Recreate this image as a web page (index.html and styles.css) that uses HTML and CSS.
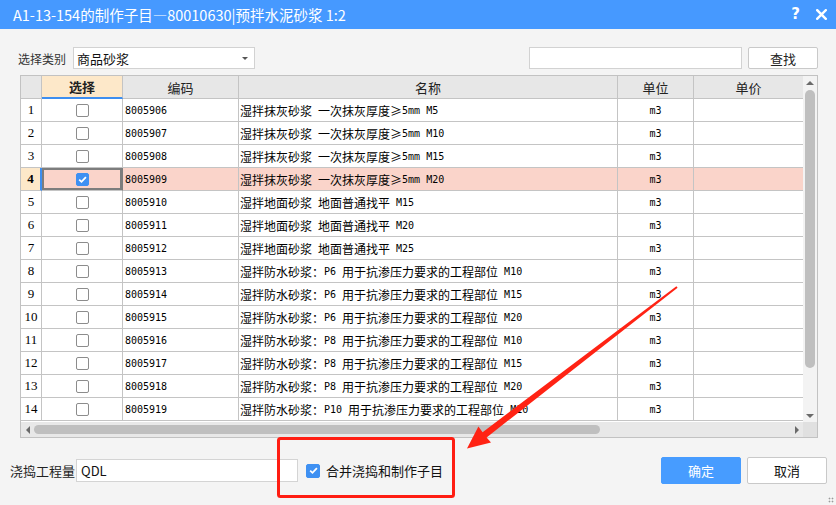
FILE: index.html
```html
<!DOCTYPE html>
<html lang="zh">
<head>
<meta charset="utf-8">
<title>制作子目</title>
<link rel="stylesheet" href="styles.css">
</head>
<body>
<div class="dialog">
  <div class="titlebar">
    <span class="title">A1-13-154的制作子目—80010630|预拌水泥砂浆 1:2</span>
    <span class="tb-btns">
      <span class="help">?</span>
      <svg class="close" width="11" height="11" viewBox="0 0 11 11"><path d="M1.2 1.2 L9.8 9.8 M9.8 1.2 L1.2 9.8" stroke="#fff" stroke-width="2.4" stroke-linecap="square"/></svg>
    </span>
  </div>

  <div class="toolbar">
    <span class="lbl">选择类别</span>
    <div class="combo"><span>商品砂浆</span><span class="caret"></span></div>
    <div class="spacer"></div>
    <div class="search"></div>
    <button class="btn find">查找</button>
  </div>

  <div class="grid">
    <div class="body">
      <div class="row head">
        <div class="cell c0"></div>
        <div class="cell c1 sel-h">选择</div>
        <div class="cell c2 ctr">编码</div>
        <div class="cell c3 ctr">名称</div>
        <div class="cell c4 ctr">单位</div>
        <div class="cell c5 ctr">单价</div>
        <div class="cell c6"></div>
        <div class="cell c7"></div>
      </div>

      <div class="row"><div class="cell c0">1</div><div class="cell c1"><span class="cb"></span></div><div class="cell c2 m">8005906</div><div class="cell c3">湿拌抹灰砂浆<span class="m"> </span>一次抹灰厚度≥<span class="m">5mm M5</span></div><div class="cell c4 m">m3</div><div class="cell c5"></div><div class="cell c6"></div><div class="cell c7"></div></div>
      <div class="row"><div class="cell c0">2</div><div class="cell c1"><span class="cb"></span></div><div class="cell c2 m">8005907</div><div class="cell c3">湿拌抹灰砂浆<span class="m"> </span>一次抹灰厚度≥<span class="m">5mm M10</span></div><div class="cell c4 m">m3</div><div class="cell c5"></div><div class="cell c6"></div><div class="cell c7"></div></div>
      <div class="row"><div class="cell c0">3</div><div class="cell c1"><span class="cb"></span></div><div class="cell c2 m">8005908</div><div class="cell c3">湿拌抹灰砂浆<span class="m"> </span>一次抹灰厚度≥<span class="m">5mm M15</span></div><div class="cell c4 m">m3</div><div class="cell c5"></div><div class="cell c6"></div><div class="cell c7"></div></div>
      <div class="row cur"><div class="cell c0">4</div><div class="cell c1 focus"><span class="cb on"><svg width="11" height="11" viewBox="0 0 11 11"><path d="M2.2 5.6 L4.5 7.8 L8.9 3.2" fill="none" stroke="#fff" stroke-width="1.8"/></svg></span></div><div class="cell c2 m">8005909</div><div class="cell c3">湿拌抹灰砂浆<span class="m"> </span>一次抹灰厚度≥<span class="m">5mm M20</span></div><div class="cell c4 m">m3</div><div class="cell c5"></div><div class="cell c6"></div><div class="cell c7"></div></div>
      <div class="row"><div class="cell c0">5</div><div class="cell c1"><span class="cb"></span></div><div class="cell c2 m">8005910</div><div class="cell c3">湿拌地面砂浆<span class="m"> </span>地面普通找平<span class="m"> M15</span></div><div class="cell c4 m">m3</div><div class="cell c5"></div><div class="cell c6"></div><div class="cell c7"></div></div>
      <div class="row"><div class="cell c0">6</div><div class="cell c1"><span class="cb"></span></div><div class="cell c2 m">8005911</div><div class="cell c3">湿拌地面砂浆<span class="m"> </span>地面普通找平<span class="m"> M20</span></div><div class="cell c4 m">m3</div><div class="cell c5"></div><div class="cell c6"></div><div class="cell c7"></div></div>
      <div class="row"><div class="cell c0">7</div><div class="cell c1"><span class="cb"></span></div><div class="cell c2 m">8005912</div><div class="cell c3">湿拌地面砂浆<span class="m"> </span>地面普通找平<span class="m"> M25</span></div><div class="cell c4 m">m3</div><div class="cell c5"></div><div class="cell c6"></div><div class="cell c7"></div></div>
      <div class="row"><div class="cell c0">8</div><div class="cell c1"><span class="cb"></span></div><div class="cell c2 m">8005913</div><div class="cell c3">湿拌防水砂浆：<span class="m">P6 </span>用于抗渗压力要求的工程部位<span class="m"> M10</span></div><div class="cell c4 m">m3</div><div class="cell c5"></div><div class="cell c6"></div><div class="cell c7"></div></div>
      <div class="row"><div class="cell c0">9</div><div class="cell c1"><span class="cb"></span></div><div class="cell c2 m">8005914</div><div class="cell c3">湿拌防水砂浆：<span class="m">P6 </span>用于抗渗压力要求的工程部位<span class="m"> M15</span></div><div class="cell c4 m">m3</div><div class="cell c5"></div><div class="cell c6"></div><div class="cell c7"></div></div>
      <div class="row"><div class="cell c0">10</div><div class="cell c1"><span class="cb"></span></div><div class="cell c2 m">8005915</div><div class="cell c3">湿拌防水砂浆：<span class="m">P6 </span>用于抗渗压力要求的工程部位<span class="m"> M20</span></div><div class="cell c4 m">m3</div><div class="cell c5"></div><div class="cell c6"></div><div class="cell c7"></div></div>
      <div class="row"><div class="cell c0">11</div><div class="cell c1"><span class="cb"></span></div><div class="cell c2 m">8005916</div><div class="cell c3">湿拌防水砂浆：<span class="m">P8 </span>用于抗渗压力要求的工程部位<span class="m"> M10</span></div><div class="cell c4 m">m3</div><div class="cell c5"></div><div class="cell c6"></div><div class="cell c7"></div></div>
      <div class="row"><div class="cell c0">12</div><div class="cell c1"><span class="cb"></span></div><div class="cell c2 m">8005917</div><div class="cell c3">湿拌防水砂浆：<span class="m">P8 </span>用于抗渗压力要求的工程部位<span class="m"> M15</span></div><div class="cell c4 m">m3</div><div class="cell c5"></div><div class="cell c6"></div><div class="cell c7"></div></div>
      <div class="row"><div class="cell c0">13</div><div class="cell c1"><span class="cb"></span></div><div class="cell c2 m">8005918</div><div class="cell c3">湿拌防水砂浆：<span class="m">P8 </span>用于抗渗压力要求的工程部位<span class="m"> M20</span></div><div class="cell c4 m">m3</div><div class="cell c5"></div><div class="cell c6"></div><div class="cell c7"></div></div>
      <div class="row"><div class="cell c0">14</div><div class="cell c1"><span class="cb"></span></div><div class="cell c2 m">8005919</div><div class="cell c3">湿拌防水砂浆：<span class="m">P10 </span>用于抗渗压力要求的工程部位<span class="m"> M10</span></div><div class="cell c4 m">m3</div><div class="cell c5"></div><div class="cell c6"></div><div class="cell c7"></div></div>
    </div>
    <div class="vscroll">
      <div class="arr"><span class="tri-up"></span></div>
      <div class="vthumb"></div>
      <div class="fill"></div>
      <div class="arr"><span class="tri-down"></span></div>
    </div>
    <div class="hscroll">
      <div class="harr"><span class="tri-left"></span></div>
      <div class="hthumb"></div>
      <div class="fill"></div>
      <div class="harr"><span class="tri-right"></span></div>
    </div>
    <div class="corner"></div>
  </div>

  <div class="footer">
    <span class="lbl2">浇捣工程量</span>
    <div class="qty">QDL</div>
    <span class="cb on big"><svg width="11" height="11" viewBox="0 0 11 11"><path d="M2.2 5.6 L4.5 7.8 L8.9 3.2" fill="none" stroke="#fff" stroke-width="1.8"/></svg></span>
    <span class="merge">合并浇捣和制作子目</span>
    <div class="spacer"></div>
    <button class="btn ok">确定</button>
    <button class="btn cancel">取消</button>
  </div>
  <div class="grip"></div>
</div>

<svg class="overlay" width="836" height="505" viewBox="0 0 836 505">
  <rect x="278.5" y="438.5" width="175" height="58" rx="2" fill="none" stroke="#ff1d12" stroke-width="3"/>
  <polygon fill="#ff2314" points="677.6,287.7 486.6,437.4 491,442.6 467,448.5 478.4,426.6 482.6,432.2 676.4,286.3"/>
</svg>
</body>
</html>
```

FILE: styles.css
```css
* { box-sizing: border-box; }
html, body { margin: 0; padding: 0; }
body {
  width: 836px;
  height: 505px;
  overflow: hidden;
  position: relative;
  background: #f4f4f4;
  font-family: "Noto Sans CJK SC", "Microsoft YaHei", sans-serif;
  color: #222;
}
.dialog { width: 836px; height: 505px; display: flex; flex-direction: column; position: relative; }

.titlebar {
  height: 29px;
  flex: none;
  background: #4699ff;
  color: #fff;
  display: flex;
  align-items: center;
  padding: 0 9px 0 13px;
}
.title { font-size: 14.5px; line-height: 29px; }
.tb-btns { margin-left: auto; display: flex; align-items: center; gap: 16px; }
.help { font-family: "DejaVu Sans", sans-serif; font-weight: bold; font-size: 15px; line-height: 29px; }
.close { display: block; }

.toolbar {
  margin-top: 18px;
  height: 22px;
  display: flex;
  align-items: center;
  padding: 0 18px 0 18px;
  flex: none;
}
.lbl { font-size: 12px; color: #333; width: 55px; }
.combo {
  width: 182px; height: 22px;
  background: #fff;
  border: 1px solid #d2d2d2;
  display: flex; align-items: center;
  padding: 0 6px 0 3px;
  font-size: 13px; color: #111;
}
.caret {
  margin-left: auto;
  width: 0; height: 0;
  border-left: 3.5px solid transparent;
  border-right: 3.5px solid transparent;
  border-top: 3.5px solid #555;
}
.spacer { flex: 1; }
.search { width: 213px; height: 22px; background: #fff; border: 1px solid #d2d2d2; }
.btn {
  font-family: "Noto Sans CJK SC", sans-serif;
  font-size: 13px;
  border-radius: 2px;
  padding: 0;
  cursor: default;
}
.find {
  width: 70px; height: 22px;
  margin-left: 6px;
  background: #fff;
  border: 1px solid #c9c9c9;
  color: #222;
}

.grid {
  margin: 6px 0 0 20px;
  width: 798px;
  height: 363px;
  border: 1px solid #c2c2c2;
  display: grid;
  grid-template-columns: 782px 14px;
  grid-template-rows: 346px 15px;
  flex: none;
  background: #fff;
}
.body { overflow: hidden; background: #fff; }
.row { display: flex; height: 23px; width: max-content; }
.cell {
  flex: none;
  height: 23px;
  border-right: 1px solid #c4c4c4;
  border-bottom: 1px solid #c4c4c4;
  display: flex;
  align-items: center;
  padding-left: 2px;
  font-size: 12px;
  color: #000;
  white-space: nowrap;
  background: #fff;
}
.c0 { width: 21px; justify-content: center; padding: 0; font-family: "Liberation Serif", serif; font-size: 13px; }
.c1 { width: 81px; justify-content: center; padding: 0; }
.c2 { width: 116px; }
.c3 { width: 379px; padding-left: 1px; }
.c4 { width: 76px; justify-content: center; padding: 0; }
.c5 { width: 110px; }
.c6 { width: 120px; }
.c7 { width: 120px; }
.m { font-family: "DejaVu Sans Mono", "Liberation Mono", monospace; font-size: 10px; }
.c3 .m { white-space: pre; }

.head { height: 23px; }
.head .cell {
  height: 23px;
  background: #e7e7e7;
  font-size: 13px;
  color: #222;
  justify-content: center;
  padding: 0;
}
.head .sel-h {
  background: #fde8c9;
  font-weight: bold;
  border-bottom: 2px solid #3d8ef0;
}

.cb {
  width: 13px; height: 13px;
  border: 1px solid #8c8c8c;
  border-radius: 2px;
  background: #fff;
  display: flex; align-items: center; justify-content: center;
}
.cb.on { background: #3e90f2; border-color: #3e90f2; }
.cb svg { display: block; }

.cur .cell { background: #fad4ca; }
.cur .c0 { background: #fde8c9; font-weight: bold; border-right: 2px solid #3d8ef0; width: 21px; }
.cur .focus { box-shadow: inset 0 0 0 2px #7d7d7d; border-right-color: #7d7d7d; width: 81px; }

.vscroll {
  background: #f3f3f3;
  display: flex;
  flex-direction: column;
  align-items: center;
}
.arr { height: 13px; width: 14px; display: flex; align-items: center; justify-content: center; flex: none; }
.tri-up { width: 0; height: 0; border-left: 4px solid transparent; border-right: 4px solid transparent; border-bottom: 4px solid #6a6a6a; }
.tri-down { width: 0; height: 0; border-left: 4px solid transparent; border-right: 4px solid transparent; border-top: 4px solid #6a6a6a; }
.vthumb { width: 10px; height: 278px; border-radius: 5px; background: #bfbfbf; margin-top: 1px; flex: none; }
.fill { flex: 1; }

.hscroll {
  background: #e8e8e8;
  display: flex;
  align-items: center;
}
.harr { width: 13px; height: 15px; display: flex; align-items: center; justify-content: center; flex: none; }
.tri-left { width: 0; height: 0; border-top: 4px solid transparent; border-bottom: 4px solid transparent; border-right: 4px solid #6a6a6a; }
.tri-right { width: 0; height: 0; border-top: 4px solid transparent; border-bottom: 4px solid transparent; border-left: 4px solid #6a6a6a; }
.hthumb { width: 566px; height: 9px; border-radius: 5px; background: #bfbfbf; flex: none; }
.corner { background: #e0e0e0; }

.footer {
  margin-top: 19px;
  height: 27px;
  display: flex;
  align-items: center;
  padding: 0 9px 0 10px;
  flex: none;
}
.lbl2 { font-size: 13px; color: #222; width: 66px; }
.qty {
  width: 222px; height: 23px;
  background: #fff;
  border: 1px solid #d4d4d4;
  font-size: 13px;
  color: #111;
  display: flex; align-items: center;
  padding-left: 4px;
}
.cb.big { margin-left: 8px; width: 14px; height: 14px; }
.merge { margin-left: 6px; font-size: 13px; color: #111; }
.ok {
  width: 80px; height: 27px;
  background: #479cff;
  border: 1px solid #479cff;
  color: #fff;
}
.cancel {
  width: 80px; height: 27px;
  margin-left: 6px;
  background: #fff;
  border: 1px solid #c9c9c9;
  color: #111;
}
.grip {
  position: absolute;
  right: 2px; bottom: 2px;
  width: 6px; height: 6px;
  background: radial-gradient(circle, #9a9a9a 0.8px, transparent 1.1px) 0 0 / 3px 3px;
}

.overlay { position: absolute; left: 0; top: 0; pointer-events: none; }
```
